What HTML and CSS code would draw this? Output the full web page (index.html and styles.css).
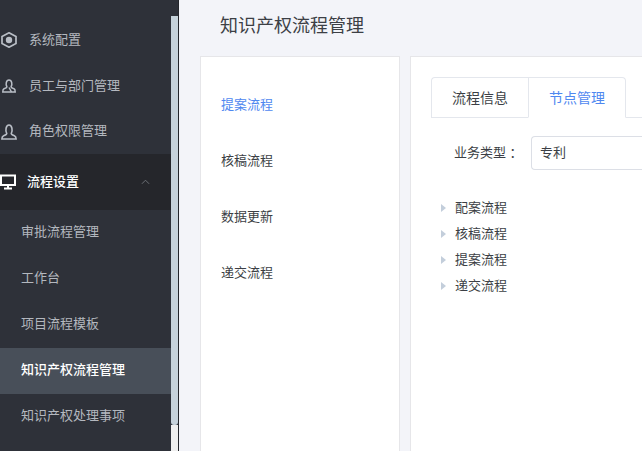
FILE: index.html
```html
<!DOCTYPE html>
<html lang="zh-CN">
<head>
    <meta charset="UTF-8">
    <meta name="viewport" content="width=device-width, initial-scale=1.0">
    <title>知识产权流程管理</title>
    <link rel="stylesheet" href="styles.css">
</head>
<body>
    <aside class="sidebar">
        <nav class="menu">
            <a class="menu-item">
                <svg class="menu-icon" viewBox="0 0 16 16"><path d="M8 .8l7 3.800v6.800L8 15.200l-7-3.800V4.600z" fill="none" stroke="#b9bec6" stroke-width="1.700"/><circle cx="8" cy="8" r="3.200" fill="#b9bec6"/></svg>
                <span>系统配置</span>
            </a>
            <a class="menu-item">
                <svg class="menu-icon" viewBox="0 0 16 16"><path d="M5.800 8.500C4.600 6.500 5 2 8 2s3.400 4.500 2.200 6.500c-.5.800.5 1.500 2.800 2.300.9.400 1.200 1.300 1.200 3.200H1.800c0-1.900.3-2.800 1.200-3.200 2.300-.8 3.300-1.500 2.800-2.300z" fill="none" stroke="#b9bec6" stroke-width="1.500"/><path d="M8 9.500l2.500 4.500" stroke="#b9bec6" stroke-width="1.500"/></svg>
                <span>员工与部门管理</span>
            </a>
            <a class="menu-item">
                <svg class="menu-icon" viewBox="0 0 16 16"><path d="M5.600 9C4.400 7 4.600 1 8 1s3.600 6 2.400 8c-.6.900.4 1.700 3 2.700 1.200.5 1.700 1.400 1.700 3.300H.9c0-1.900.5-2.800 1.700-3.300 2.600-1 3.600-1.800 3-2.700z" fill="none" stroke="#b9bec6" stroke-width="1.600"/></svg>
                <span>角色权限管理</span>
            </a>
            <a class="menu-group">
                <svg class="group-icon" viewBox="0 0 16 16"><path d="M1 1.500h14v9.500H1z" fill="none" stroke="#fff" stroke-width="2"/><path d="M8 11v3.500M4 14.500h8" stroke="#fff" stroke-width="2"/></svg>
                <span>流程设置</span>
                <svg class="group-arrow" viewBox="0 0 10 6"><path d="M1 5l4-4 4 4" fill="none" stroke="#74787e" stroke-width="1"/></svg>
            </a>
            <a class="submenu-item">审批流程管理</a>
            <a class="submenu-item">工作台</a>
            <a class="submenu-item">项目流程模板</a>
            <a class="submenu-item active">知识产权流程管理</a>
            <a class="submenu-item">知识产权处理事项</a>
        </nav>
        <div class="scrollbar"><div class="scroll-thumb"></div></div>
    </aside>

    <main class="content">
        <h1 class="page-title">知识产权流程管理</h1>
        <div class="panels">
            <section class="panel flow-list">
                <a class="flow-link current">提案流程</a>
                <a class="flow-link">核稿流程</a>
                <a class="flow-link">数据更新</a>
                <a class="flow-link">递交流程</a>
            </section>
            <section class="panel detail">
                <div class="tabs">
                    <div class="tab">流程信息</div>
                    <div class="tab selected">节点管理</div>
                </div>
                <div class="form-row">
                    <label class="form-label">业务类型 ：</label>
                    <div class="select-box">专利</div>
                </div>
                <ul class="tree">
                    <li><i class="caret"></i><span>配案流程</span></li>
                    <li><i class="caret"></i><span>核稿流程</span></li>
                    <li><i class="caret"></i><span>提案流程</span></li>
                    <li><i class="caret"></i><span>递交流程</span></li>
                </ul>
            </section>
        </div>
    </main>
</body>
</html>
```

FILE: styles.css
```css
body {
    margin: 0;
    height: 451px;
    display: flex;
    overflow: hidden;
    background-color: #f3f4f9;
    font-family: "Liberation Sans", "Noto Sans CJK SC", sans-serif;
    font-size: 13px;
    color: #3c3f45;
}

.sidebar {
    width: 179px;
    flex-shrink: 0;
    box-sizing: border-box;
    display: flex;
    background-color: #2e3139;
    border-right: 1px solid #24262b;
}

.menu {
    width: 171px;
    padding-top: 17px;
    flex-shrink: 0;
    display: flex;
    flex-direction: column;
}

.menu-item {
    height: 46px;
    flex-shrink: 0;
    display: flex;
    align-items: center;
    gap: 12px;
    padding-left: 1px;
    color: #b4b8bf;
}

.menu-item:nth-child(3) {
    height: 45px;
}

.menu-item span,
.menu-group span {
    margin-bottom: 4px;
}

.menu-icon {
    width: 16px;
    height: 16px;
    flex-shrink: 0;
}

.menu-group {
    height: 56px;
    flex-shrink: 0;
    display: flex;
    align-items: center;
    gap: 11px;
    background-color: #25262b;
    color: #fff;
    font-weight: 500;
}

.group-icon {
    width: 16px;
    height: 16px;
    flex-shrink: 0;
}

.group-arrow {
    width: 9px;
    height: 6px;
    margin-left: 51px;
}

.submenu-item {
    height: 46px;
    flex-shrink: 0;
    box-sizing: border-box;
    display: flex;
    align-items: center;
    padding: 0 0 5px 21px;
    color: #b4b8bf;
}

.submenu-item.active {
    background-color: #484f59;
    color: #fff;
    font-weight: 500;
}

.scrollbar {
    width: 7px;
    display: flex;
    flex-direction: column;
    padding-top: 16px;
}

.scrollbar::after {
    content: "";
    flex: 1;
    background-color: #efefef;
}

.scroll-thumb {
    height: 409px;
    background-color: #c6d2db;
    border-radius: 0 0 3px 3px;
}

.content {
    flex: 1;
    min-width: 0;
    padding-left: 21px;
}

.page-title {
    margin: 0;
    height: 56px;
    padding: 14px 0 0 20px;
    box-sizing: border-box;
    font-size: 18px;
    font-weight: 400;
    line-height: 25px;
}

.panels {
    display: flex;
    gap: 10px;
}

.panel {
    height: 395px;
    box-sizing: border-box;
    background-color: #fff;
    border: 1px solid #e6e6e9;
    border-bottom: none;
}

.flow-list {
    width: 200px;
    flex-shrink: 0;
    padding-top: 20px;
    display: flex;
    flex-direction: column;
}

.flow-link {
    height: 56px;
    box-sizing: border-box;
    display: flex;
    align-items: center;
    padding: 0 0 3px 20px;
}

.flow-link.current {
    color: #4f88f0;
}

.detail {
    flex: 1;
    min-width: 0;
    border-right: none;
    padding: 20px 0 0 20px;
}

.tabs {
    display: flex;
    height: 41px;
    box-sizing: border-box;
    border-bottom: 1px solid #e4e7ed;
}

.tab {
    width: 97px;
    height: 41px;
    box-sizing: border-box;
    display: flex;
    align-items: center;
    justify-content: center;
    padding-bottom: 2px;
    font-size: 14px;
    border: 1px solid #e4e7ed;
    border-right: none;
}

.tab:first-child {
    border-radius: 4px 0 0 0;
}

.tab.selected {
    width: 98px;
    color: #4f88f0;
    border-right: 1px solid #e4e7ed;
    border-bottom-color: #fff;
    border-radius: 0 4px 0 0;
}

.form-row {
    display: flex;
    align-items: center;
    margin-top: 18px;
}

.form-label {
    width: 100px;
    box-sizing: border-box;
    padding: 0 0 4px 23px;
    flex-shrink: 0;
}

.select-box {
    flex: 1;
    height: 34px;
    box-sizing: border-box;
    display: flex;
    align-items: center;
    padding: 0 0 4px 8px;
    border: 1px solid #dcdfe6;
    border-right: none;
    border-radius: 4px 0 0 4px;
}

.tree {
    list-style: none;
    margin: 25px 0 0;
    padding: 0;
}

.tree li {
    height: 26px;
    display: flex;
    align-items: center;
    padding-left: 10px;
}

.tree span {
    margin-bottom: 3px;
}

.caret {
    width: 0;
    height: 0;
    margin-right: 9px;
    border-left: 5px solid #c3cedb;
    border-top: 4px solid transparent;
    border-bottom: 4px solid transparent;
}
```
